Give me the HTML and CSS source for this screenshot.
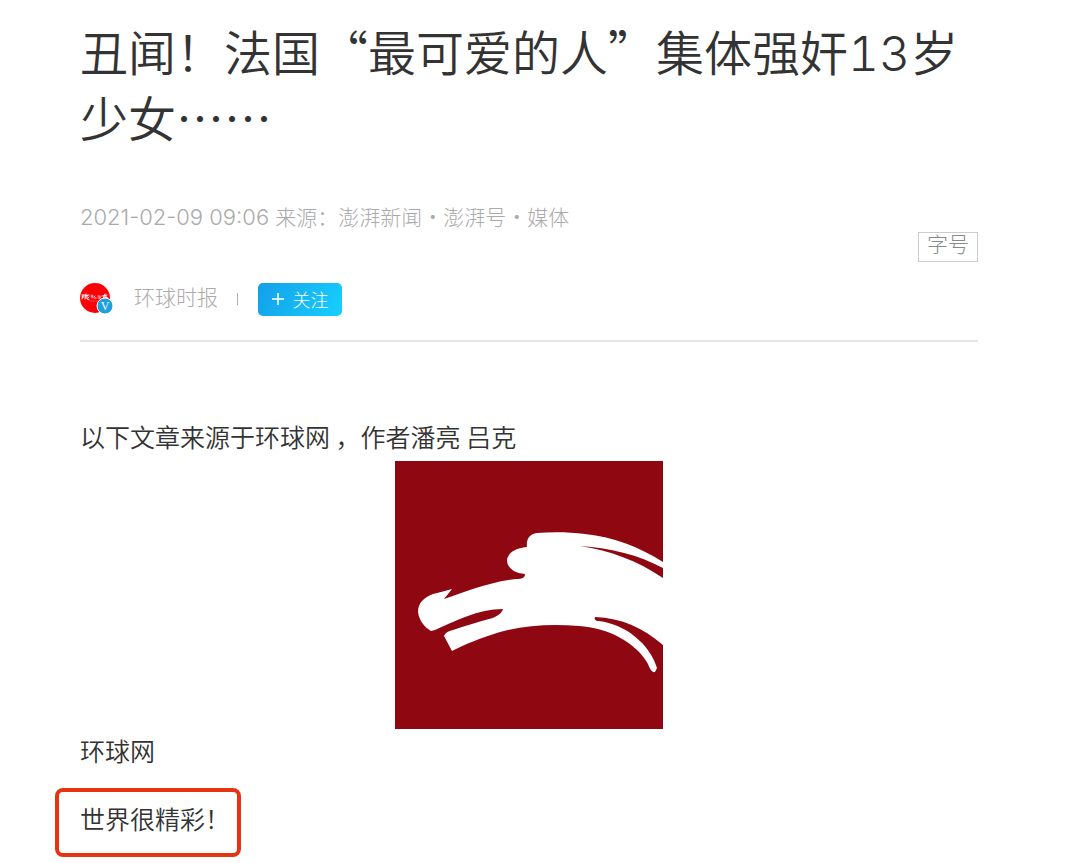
FILE: index.html
```html
<!DOCTYPE html>
<html lang="zh-CN">
<head>
  <meta charset="UTF-8">
  <meta name="viewport" content="width=device-width, initial-scale=1.0">
  <title>澎湃号 - 环球时报</title>
  <link rel="stylesheet" href="styles.css">
</head>
<body>
  <article class="article">
    <h1 class="title">丑闻！法国“最可爱的人”集体强奸<span class="num">13</span>岁少女……</h1>

    <div class="meta">
      <p class="source"><time class="date">2021-02-09 09:06 </time>来源：澎湃新闻·澎湃号·媒体</p>
      <button type="button" class="font-size-btn">字号</button>
    </div>

    <div class="author">
      <a href="#" class="author-link">
        <svg class="avatar" viewBox="0 0 34 34" aria-hidden="true">
          <circle cx="15" cy="16" r="15" fill="#fb0007"/>
          <g fill="none" stroke="#fff" stroke-width="1" stroke-linecap="round">
            <path d="M2 13h3M3 13l-1 4M2 15h2M6 12l-1 5M5 14l4-1M7 13v4l2 .5M8 16l1-1"/>
            <path d="M11 14h2M12 13v3M14 15l1-1M14 16h2M18 14h1M18 16h2M20 14v2" stroke-width=".8"/>
            <path d="M22 14l5-1M25 12l-2 5M24 15l4 1M26 14v3" />
            <path d="M9 19h9" stroke-width=".4" opacity=".6"/>
          </g>
          <circle cx="25" cy="24" r="8" fill="#1f9fe0" stroke="#fff" stroke-width="1"/>
          <text class="badge-letter" x="25" y="28" text-anchor="middle">V</text>
        </svg>
        <span class="author-name">环球时报</span>
      </a>
      <span class="divider"></span>
      <button type="button" class="follow">
        <svg class="plus" viewBox="0 0 12 12" aria-hidden="true">
          <path d="M6 0v12M0 6h12" stroke="#fff" stroke-width="1.5"/>
        </svg>
        关注
      </button>
    </div>

    <div class="content">
      <p>以下文章来源于环球网 ，作者潘亮 吕克</p>
      <svg class="logo" viewBox="0 0 268 268" role="img" aria-label="环球网">
        <rect width="268" height="268" fill="#8f0710"/>
        <path fill="#fff" d="M36 170C29 166 24 159 23 151C23 141 30 136 38 133C45 131 51 130 57 128L49 138C70 131 94 121 121 118C127 118 130 117 130 113C118 112 112 106 112 99C113 92 120 87 132 86C131 79 134 73 142 72C157 71 174 71 190 73C219 76 244 86 268 101V107C243 94 217 87 185 85C216 90 241 99 268 117V184C248 167 227 157 200 156C199 158 200 160 204 160C230 163 255 183 262 207L260 211C257 212 255 208 253 203C240 180 212 167 184 165C157 163 130 164 105 171C86 177 70 183 57 190L49 175C50 172 53 170 58 169C70 165 82 161 94 158C102 156 107 152 108 148C83 148 60 160 40 169Z"/>
      </svg>
      <p>环球网</p>
      <p class="marked">世界很精彩！</p>
    </div>
  </article>
</body>
</html>
```

FILE: styles.css
```css
* {
  box-sizing: border-box;
  margin: 0;
  padding: 0;
}
body {
  background-color: #fff;
  color: #333;
  font-family: "Noto Sans CJK SC", sans-serif;
  font-weight: 350;
}
button {
  font-family: inherit;
  font-weight: 300;
  cursor: pointer;
}
.article {
  padding: 17px 102px 6px 80px;
}
.title {
  font-size: 48px;
  font-weight: inherit;
  line-height: 66px;
}
.num, .date {
  font-family: Inter, sans-serif;
  font-weight: 300;
  line-height: 1;
}
.num {
  font-variant-numeric: tabular-nums;
}
.date {
  font-size: 22px;
}
.meta {
  display: flex;
  justify-content: space-between;
  align-items: flex-end;
  margin-top: 51px;
  color: #aaa;
  font-weight: 300;
}
.source {
  font-size: 21px;
  line-height: 32px;
  padding-bottom: 30px;
}
.font-size-btn {
  width: 60px;
  height: 30px;
  border: 1px solid #ccc;
  background: #fff;
  color: #888;
  font-size: 21px;
  line-height: 20px;
  padding-bottom: 8px;
}
.author {
  display: flex;
  align-items: center;
  margin-top: 20px;
  padding-bottom: 24px;
  border-bottom: 2px solid #e5e5e5;
}
.author-link {
  display: flex;
  align-items: center;
  gap: 20px;
  color: #aaa;
  font-weight: 300;
  text-decoration: none;
}
.avatar {
  display: block;
  width: 34px;
  height: 34px;
}
.badge-letter {
  fill: #fff;
  font-family: "Liberation Serif", serif;
  font-size: 12px;
}
.author-name {
  font-size: 21px;
  line-height: 26px;
  padding-bottom: 6px;
}
.divider {
  width: 1px;
  height: 12px;
  margin: 0 20px 0 19px;
  background: #b0b0b0;
}
.follow {
  display: flex;
  align-items: center;
  justify-content: center;
  gap: 9px;
  width: 84px;
  height: 33px;
  border: none;
  border-radius: 5px;
  background: linear-gradient(120deg, #149eea, #16d0ff);
  color: #fff;
  font-size: 18px;
}
.plus {
  width: 12px;
  height: 12px;
}
.content {
  margin-top: 73px;
  font-size: 25px;
  line-height: 42px;
}
.logo {
  display: block;
  width: 268px;
  height: 268px;
  margin: 4px auto 0;
}
.marked {
  width: fit-content;
  margin: 17px 0 0 -25px;
  padding: 5px 7px 13px 21px;
  border: 4px solid #e63312;
  border-radius: 8px;
  line-height: 43px;
}
```
